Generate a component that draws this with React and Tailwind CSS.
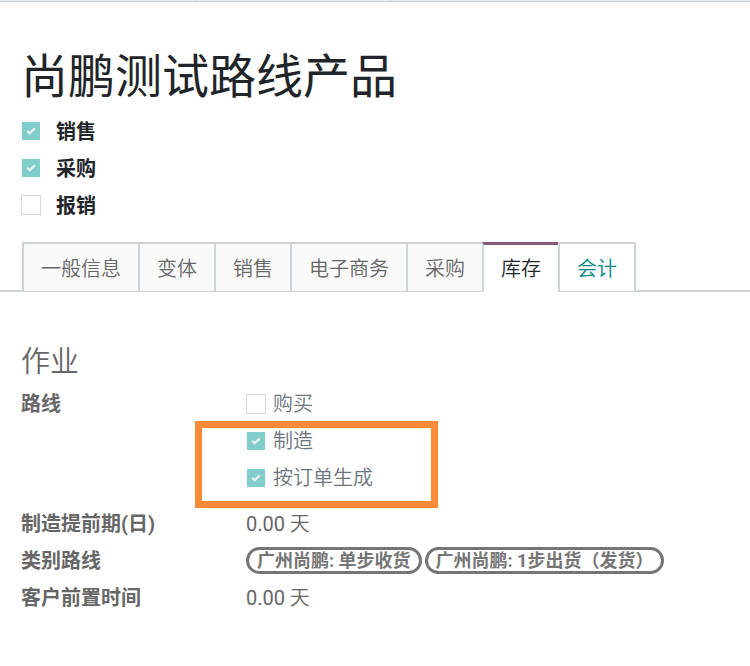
import React from "react";

const productOptions = [
  { id: "sale", label: "销售", checked: true },
  { id: "purchase", label: "采购", checked: true },
  { id: "expense", label: "报销", checked: false },
];

const tabs = [
  { id: "general", label: "一般信息" },
  { id: "variants", label: "变体" },
  { id: "sales", label: "销售" },
  { id: "ecommerce", label: "电子商务" },
  { id: "purchase", label: "采购" },
  { id: "inventory", label: "库存", active: true },
  { id: "accounting", label: "会计", link: true },
];

function Checkbox({ id, checked }) {
  return (
    <span className="grid size-5 shrink-0 place-items-center">
      <input
        id={id}
        type="checkbox"
        defaultChecked={checked}
        className="peer col-start-1 row-start-1 size-5 appearance-none border border-[#d9d9d9] bg-white checked:size-[18px] checked:border-0 checked:bg-[#7fcecb]"
      />
      <svg
        viewBox="0 0 10 8"
        className="pointer-events-none invisible col-start-1 row-start-1 h-2 w-2.5 peer-checked:visible"
        fill="none"
        stroke="#e9eeee"
        strokeWidth="2.4"
      >
        <path d="M1.2 3.8l2.5 2.4L8.8 1.4" />
      </svg>
    </span>
  );
}

function Tab({ tab }) {
  let style = "border-t-2 border-b border-[#ced4da] bg-[#fafafa] text-[#666666]";
  if (tab.active) {
    style =
      "border-t-3 border-b border-x-[#ced4da] border-t-[#875a7b] border-b-white bg-white text-[#212529]";
  } else if (tab.link) {
    style = "border-t-2 border-b border-[#ced4da] bg-white text-[#008784]";
  }

  return (
    <button
      type="button"
      role="tab"
      aria-selected={Boolean(tab.active)}
      className={`-mb-0.5 -ml-0.5 h-[50px] border-x-2 px-[17px] pt-0.5 whitespace-nowrap ${style}`}
    >
      {tab.label}
    </button>
  );
}

function Field({ label, children }) {
  return (
    <div className="flex h-[37px] items-center">
      <dt className="w-[225px] shrink-0 font-bold">{label}</dt>
      <dd className="flex items-center gap-[3px]">{children}</dd>
    </div>
  );
}

function Days({ value }) {
  return (
    <span>
      <span className="font-normal">{value}</span> 天
    </span>
  );
}

function Tag({ children }) {
  return (
    <span className="h-[27px] rounded-full border-3 border-[#757575] px-2 text-lg leading-[21px] font-bold whitespace-nowrap text-[#757575]">
      {children}
    </span>
  );
}

function RouteOption({ id, label, checked }) {
  return (
    <div className="flex h-[37px] items-center gap-[7px] text-[#6c757d]">
      <Checkbox id={id} checked={checked} />
      <label htmlFor={id}>{label}</label>
    </div>
  );
}

export default function App() {
  return (
    <div className="bg-white font-[Roboto,'Noto_Sans_CJK_SC',sans-serif] text-xl font-[350] text-[#666666]">
      {/* 按钮栏底边 */}
      <div className="grid h-0.5 grid-cols-[196px_195px_196px_1fr] divide-x divide-[#ced4da] border-b border-[#ced4da] bg-[#e9ecef]">
        <span />
        <span />
        <span />
        <span />
      </div>

      {/* 产品名称 */}
      <header className="px-[21px] pt-10 text-[#212529]">
        <h1 className="text-[47px] leading-[70px] font-normal">尚鹏测试路线产品</h1>
        {productOptions.map((option) => (
          <div key={option.id} className="flex h-[37px] items-center gap-[15px]">
            <Checkbox id={option.id} checked={option.checked} />
            <label htmlFor={option.id} className="pt-0.5 font-bold">
              {option.label}
            </label>
          </div>
        ))}
      </header>

      {/* 标签页 */}
      <div role="tablist" className="mt-[19px] flex border-b-2 border-[#ced4da] pl-6">
        {tabs.map((tab) => (
          <Tab key={tab.id} tab={tab} />
        ))}
      </div>

      {/* 作业 */}
      <section className="px-[21px] pt-12 pb-12">
        <h2 className="text-[29px] leading-[45px]">作业</h2>
        <dl>
          <div className="flex">
            <dt className="w-[225px] shrink-0 leading-[39px] font-bold">路线</dt>
            <dd className="relative pb-[9px]">
              <RouteOption id="buy" label="购买" />
              <RouteOption id="manufacture" label="制造" checked />
              <RouteOption id="mto" label="按订单生成" checked />
              <div className="pointer-events-none absolute top-9 -left-[51px] h-[87px] w-[243px] border-7 border-[#f88a38]" />
            </dd>
          </div>
          <Field label="制造提前期(日)">
            <Days value="0.00" />
          </Field>
          <Field label="类别路线">
            <Tag>广州尚鹏: 单步收货</Tag>
            <Tag>广州尚鹏: 1步出货（发货）</Tag>
          </Field>
          <Field label="客户前置时间">
            <Days value="0.00" />
          </Field>
        </dl>
      </section>
    </div>
  );
}
